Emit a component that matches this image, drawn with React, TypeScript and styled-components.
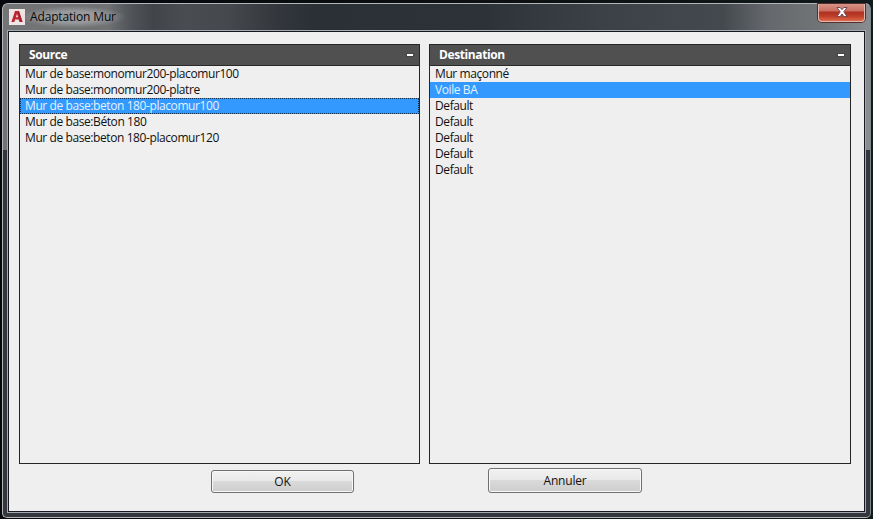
import React from "react";
import styled, { createGlobalStyle } from "styled-components";

const GlobalStyle = createGlobalStyle`
  * { box-sizing: border-box; }
  html, body { margin: 0; padding: 0; background: #07090c; overflow: hidden; }
  body { font-family: "Open Sans", "Noto Sans", sans-serif; font-size: 12px; color: #111; }
`;

const Desktop = styled.div`
  width: 873px;
  height: 519px;
  padding: 3px 2px 1px 2px;
  background: linear-gradient(90deg, #05070c, #0d1112 60%, #10191b);
`;

const WindowFrame = styled.div`
  display: flex;
  flex-direction: column;
  width: 869px;
  height: 515px;
  padding: 0 5px 5px;
  border: 1px solid #b4b6ba;
  border-right-color: #7f8689;
  border-radius: 6px 6px 5px 5px;
  background:
    linear-gradient(180deg, transparent 146px, #33373d 146px),
    linear-gradient(90deg, #737475 0, #6f7173 105px, #505357 128px, #41454a 150px, #494d51 180px, #45494e 225px, #33373c 275px, #2b3036 310px, #2d3238 480px, #343940 530px, #3c4147 600px, #41464c 670px, #44494e 720px, #65696d 765px, #717577 820px, #898d90 100%);
`;

const TitleBar = styled.header`
  display: flex;
  height: 27px;
  flex: none;
  padding-left: 1px;
`;

const AppIcon = styled.svg`
  width: 16px;
  height: 16px;
  margin-top: 5px;
  flex: none;
`;

const Title = styled.h1`
  margin: 2px 0 0 -5px;
  padding: 2px 10px 0;
  font-size: 12px;
  font-weight: 400;
  line-height: 18px;
  height: 22px;
  letter-spacing: -0.15px;
  color: #080808;
  white-space: nowrap;
  background: radial-gradient(closest-side, rgba(178, 181, 184, 0.6) 50%, rgba(150, 153, 157, 0));
`;

const CloseButton = styled.button`
  display: flex;
  align-items: center;
  justify-content: center;
  width: 47px;
  height: 18px;
  margin: 0 0 0 auto;
  padding: 0 0 1px;
  border: 1px solid #e2b9b2;
  border-top: 0;
  border-radius: 0 0 4px 4px;
  box-shadow: 0 0 0 1px #54302d;
  background: linear-gradient(180deg, #d69486 0, #c96e60 7px, #af3020 8px, #bd3c28 12px, #dd6c4c 100%);
`;

const Client = styled.main`
  flex: 1;
  min-height: 0;
  border: 1px solid #14181e;
  outline: 1px solid #a5a8ae;
  background: #efefef;
  padding: 12px 0 0 10px;
`;

const Panels = styled.div`
  display: grid;
  grid-template-columns: 401px 422px;
  column-gap: 9px;
  height: 420px;
`;

const Panel = styled.section`
  border: 1px solid #252525;
  background: #efefef;
`;

const PanelHeader = styled.div`
  display: flex;
  align-items: center;
  justify-content: space-between;
  height: 21px;
  padding: 0 6px 0 9px;
  border-bottom: 1px solid #292929;
  background: #505050;
  color: #fff;
`;

const PanelTitle = styled.h2`
  margin: 0;
  font-size: 12px;
  line-height: 18px;
  font-weight: 700;
  letter-spacing: -0.4px;
`;

const Collapse = styled.span`
  width: 6px;
  height: 2px;
  background: #fff;
  box-shadow: 0 0 0 1px #454545;
`;

const List = styled.ul`
  margin: 0;
  padding: 0;
  list-style: none;
`;

const Item = styled.li<{ $selected?: boolean; $focused?: boolean }>`
  height: 16px;
  padding-left: ${(p) => (p.$focused ? 4 : 5)}px;
  line-height: ${(p) => (p.$focused ? 14 : 16)}px;
  border: ${(p) => (p.$focused ? "1px dotted #102c50" : "0")};
  white-space: nowrap;
  letter-spacing: -0.41px;
  color: ${(p) => (p.$selected ? "#e4f2ff" : "#111")};
  background: ${(p) => (p.$selected ? "#3399ff" : "transparent")};
`;

const Actions = styled.footer`
  display: flex;
  align-items: flex-end;
  height: 29px;
  padding-left: 192px;
  gap: 134px;
`;

const Button = styled.button<{ $width: number; $height: number }>`
  width: ${(p) => p.$width}px;
  height: ${(p) => p.$height}px;
  padding: 0;
  border: 1px solid #707070;
  border-radius: 3px;
  box-shadow: inset 0 0 0 1px #f8f8f8;
  background: linear-gradient(180deg, #f1f1f1 0, #e9e9e9 49%, #dadada 50%, #cdcdcd 100%);
  color: #111;
  font: inherit;
  line-height: 18px;
  letter-spacing: -0.2px;
`;

const sources = [
  { label: "Mur de base:monomur200-placomur100" },
  { label: "Mur de base:monomur200-platre" },
  { label: "Mur de base:beton 180-placomur100", selected: true },
  { label: "Mur de base:Béton 180" },
  { label: "Mur de base:beton 180-placomur120" },
];

const destinations = ["Mur maçonné", "Voile BA", "Default", "Default", "Default", "Default", "Default"];

export default function App() {
  return (
    <>
      <GlobalStyle />
      <Desktop>
        <WindowFrame>
          <TitleBar>
            <AppIcon viewBox="0 0 16 16">
              <rect width="16" height="16" fill="#f1e4e4" />
              <path d="M2.4 13 6 2h4l3.6 11h-3.2l-.7-2.4H6.1L5.4 13z" fill="#b92732" />
              <path d="m8 4.8 1.1 3.4H6.9z" fill="#f1e4e4" />
              <path d="M8.6 2H10l3.6 11h-1.7z" fill="#8f1e2a" opacity=".6" />
            </AppIcon>
            <Title>Adaptation Mur</Title>
            <CloseButton aria-label="Fermer">
              <svg width="12" height="10" viewBox="0 0 12 10">
                <path d="M1 .5h3.2L6 2.7 7.8.5H11L7.8 4.8 11 9.5H7.8L6 7 4.2 9.5H1l3.2-4.7z" fill="#fff" stroke="#65434b" strokeWidth=".9" />
              </svg>
            </CloseButton>
          </TitleBar>
          <Client>
            <Panels>
              <Panel>
                <PanelHeader>
                  <PanelTitle>Source</PanelTitle>
                  <Collapse />
                </PanelHeader>
                <List>
                  {sources.map((s) => (
                    <Item key={s.label} $selected={s.selected} $focused={s.selected}>
                      {s.label}
                    </Item>
                  ))}
                </List>
              </Panel>
              <Panel>
                <PanelHeader>
                  <PanelTitle>Destination</PanelTitle>
                  <Collapse />
                </PanelHeader>
                <List>
                  {destinations.map((label, i) => (
                    <Item key={i} $selected={i === 1}>
                      {label}
                    </Item>
                  ))}
                </List>
              </Panel>
            </Panels>
            <Actions>
              <Button $width={143} $height={23}>OK</Button>
              <Button $width={154} $height={25}>Annuler</Button>
            </Actions>
          </Client>
        </WindowFrame>
      </Desktop>
    </>
  );
}
